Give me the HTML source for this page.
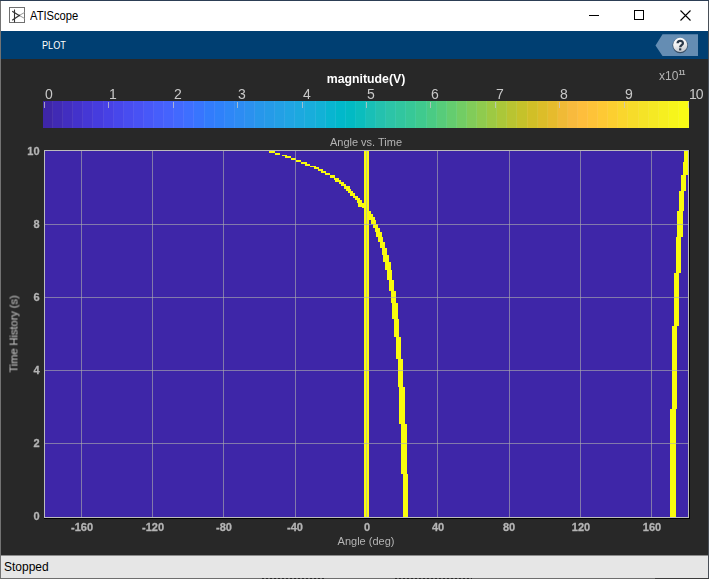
<!DOCTYPE html>
<html><head><meta charset="utf-8"><style>
*{margin:0;padding:0;box-sizing:border-box}
html,body{width:709px;height:579px;overflow:hidden;background:#282828;font-family:"Liberation Sans",sans-serif}
.a{position:absolute}
#border-l{left:0;top:0;width:1px;height:579px;background:#737373}
#border-r{left:708px;top:0;width:1px;height:579px;background:#4a5058}
#border-t{left:0;top:0;width:709px;height:1px;background:#2c3e55}
#border-b{left:0;top:578px;width:709px;height:1px;background:#6e6e6e}
#title{left:1px;top:1px;width:707px;height:30px;background:#fff}
#title .t{position:absolute;left:29px;top:7px;font-size:13px;color:#000;line-height:16px;transform:scaleX(0.86);transform-origin:0 0}
#tool{left:1px;top:31px;width:707px;height:28px;background:#003f72}
#tool .t{position:absolute;left:40.8px;top:7px;font-size:11px;color:#fff;line-height:14px;transform:scaleX(0.83);transform-origin:0 0}
#dark{left:1px;top:59px;width:707px;height:496px;background:#282828}
#status{left:1px;top:555px;width:707px;height:23px;background:#e6e6e6;border-top:1px solid #8c8c8c}
#status .t{position:absolute;left:3px;top:4px;font-size:12px;color:#000;line-height:15px}
.g{will-change:transform}
.xl{will-change:transform;-webkit-text-stroke:0.3px #b4b4b4;position:absolute;top:521px;width:60px;text-align:center;font-size:11px;font-weight:bold;color:#b4b4b4;line-height:13px}
.yl{will-change:transform;-webkit-text-stroke:0.3px #b4b4b4;position:absolute;left:0;width:39.6px;text-align:right;font-size:11px;font-weight:bold;color:#b4b4b4;line-height:14px}
.cl{will-change:transform;position:absolute;top:86px;font-size:14px;color:#c8c8c8;line-height:16px}
.ct{position:absolute;top:102px;width:1px;height:6px;background:rgba(200,200,200,0.75)}
</style></head><body>
<div class="a" id="dark"></div>
<div class="a" id="title">
  <svg class="a" style="left:8px;top:6px" width="17" height="17" viewBox="0 0 17 17">
    <rect x="0.5" y="0.5" width="15" height="15" fill="#fff" stroke="#707070" stroke-width="1"/>
    <path d="M5.5 2.5 V15.5" stroke="#333" stroke-width="1.1" fill="none"/>
    <path d="M3.2 4.3 L11 9 M3.2 13.3 L11 7.9" stroke="#333" stroke-width="1.2" fill="none"/>
    <path d="M11 8.9 L15.5 11.4 M11 8 L15.5 5.5" stroke="#9a9a9a" stroke-width="1" fill="none"/>
  </svg>
  <div class="t">ATIScope</div>
  <svg class="a" style="left:587px;top:8px" width="110" height="14" viewBox="0 0 110 14">
    <rect x="1" y="6" width="10" height="1" fill="#000"/>
    <rect x="46.5" y="1.5" width="9" height="9" fill="none" stroke="#000" stroke-width="1"/>
    <path d="M92.5 1.5 L102.5 11.5 M102.5 1.5 L92.5 11.5" stroke="#000" stroke-width="1.1" fill="none"/>
  </svg>
</div>
<div class="a" id="tool">
  <div class="t">PLOT</div>
  <svg class="a" style="left:653px;top:2px" width="46" height="25" viewBox="0 0 46 25">
    <polygon points="1.5,12.5 8.5,1.2 44,1.2 44,23 8.5,23" fill="#658db3"/>
    <defs><linearGradient id="hg" x1="0" y1="0" x2="0.3" y2="1"><stop offset="0" stop-color="#ffffff"/><stop offset="0.55" stop-color="#f2f2f2"/><stop offset="1" stop-color="#c9cdd2"/></linearGradient></defs>
    <circle cx="26.2" cy="12.6" r="7.7" fill="#2e4257" fill-opacity="0.85"/>
    <circle cx="26.2" cy="11.9" r="7.1" fill="url(#hg)"/>
    <path d="M23.6 10.3 C23.6 7.2, 28.9 7.0, 28.9 10.2 C28.9 12.2, 26.2 12.2, 26.2 14.3" stroke="#2a3848" stroke-width="2.3" fill="none"/>
    <rect x="25.1" y="15.3" width="2.2" height="2.1" fill="#2a3848"/>
  </svg>
</div>
<div class="a" id="status"><div class="t">Stopped</div></div>

<div class="a g" style="left:0;top:72px;width:709px;text-align:center;font-size:12.3px;font-weight:bold;color:#fff;line-height:15px;padding-left:23px;">magnitude(V)</div>
<div class="a g" style="left:658.5px;top:69px;font-size:12px;color:#b4b4b4;line-height:15px">x10<span style="font-size:7px;font-weight:bold;position:absolute;left:19.6px;top:-1.2px;line-height:10px;letter-spacing:-0.6px">11</span></div>
<div class="a" style="left:43px;top:101px;width:646px;height:27px;background:linear-gradient(to right,#3e26a8 0.000%, #3e26a8 1.562%,#402ab4 1.562%, #402ab4 3.125%,#422ec0 3.125%, #422ec0 4.688%,#4332cb 4.688%, #4332cb 6.250%,#4537d5 6.250%, #4537d5 7.812%,#463cde 7.812%, #463cde 9.375%,#4741e5 9.375%, #4741e5 10.938%,#4747eb 10.938%, #4747eb 12.500%,#484df0 12.500%, #484df0 14.062%,#4852f4 14.062%, #4852f4 15.625%,#4758f8 15.625%, #4758f8 17.188%,#465efb 17.188%, #465efb 18.750%,#4563fd 18.750%, #4563fd 20.312%,#4269fe 20.312%, #4269fe 21.875%,#3e6fff 21.875%, #3e6fff 23.438%,#3875fe 23.438%, #3875fe 25.000%,#327cfc 25.000%, #327cfc 26.562%,#2f81fa 26.562%, #2f81fa 28.125%,#2e87f7 28.125%, #2e87f7 29.688%,#2d8cf3 29.688%, #2d8cf3 31.250%,#2b91ef 31.250%, #2b91ef 32.812%,#2797eb 32.812%, #2797eb 34.375%,#259be8 34.375%, #259be8 35.938%,#23a0e5 35.938%, #23a0e5 37.500%,#20a5e3 37.500%, #20a5e3 39.062%,#1ca9df 39.062%, #1ca9df 40.625%,#18addb 40.625%, #18addb 42.188%,#12b1d6 42.188%, #12b1d6 43.750%,#08b5d0 43.750%, #08b5d0 45.312%,#01b8ca 45.312%, #01b8ca 46.875%,#02bac3 46.875%, #02bac3 48.438%,#0bbdbd 48.438%, #0bbdbd 50.000%,#19bfb6 50.000%, #19bfb6 51.562%,#24c1ae 51.562%, #24c1ae 53.125%,#2cc4a7 53.125%, #2cc4a7 54.688%,#31c69f 54.688%, #31c69f 56.250%,#37c897 56.250%, #37c897 57.812%,#3fca8e 57.812%, #3fca8e 59.375%,#4acb84 59.375%, #4acb84 60.938%,#57cc7a 60.938%, #57cc7a 62.500%,#64cd6f 62.500%, #64cd6f 64.062%,#72cd64 64.062%, #72cd64 65.625%,#81cc59 65.625%, #81cc59 67.188%,#8fcb4e 67.188%, #8fcb4e 68.750%,#9dc943 68.750%, #9dc943 70.312%,#abc739 70.312%, #abc739 71.875%,#b9c431 71.875%, #b9c431 73.438%,#c5c22a 73.438%, #c5c22a 75.000%,#d1bf27 75.000%, #d1bf27 76.562%,#dcbd29 76.562%, #dcbd29 78.125%,#e6bb2d 78.125%, #e6bb2d 79.688%,#f0ba36 79.688%, #f0ba36 81.250%,#f8ba3d 81.250%, #f8ba3d 82.812%,#febe3c 82.812%, #febe3c 84.375%,#fec338 84.375%, #fec338 85.938%,#fec934 85.938%, #fec934 87.500%,#fccf30 87.500%, #fccf30 89.062%,#fad62d 89.062%, #fad62d 90.625%,#f7dc2a 90.625%, #f7dc2a 92.188%,#f5e327 92.188%, #f5e327 93.750%,#f5e924 93.750%, #f5e924 95.312%,#f6ef20 95.312%, #f6ef20 96.875%,#f7f51b 96.875%, #f7f51b 98.438%,#f9fb15 98.438%, #f9fb15 100.000%)"></div>
<div class="a" style="left:43px;top:101px;width:646px;height:27px;background:repeating-linear-gradient(to right, rgba(255,255,255,0) 0 9.094px, rgba(255,255,255,0.07) 9.094px 10.094px)"></div>
<div class="ct" style="left:44px"></div><div class="ct" style="left:108px"></div><div class="ct" style="left:173px"></div><div class="ct" style="left:237px"></div><div class="ct" style="left:302px"></div><div class="ct" style="left:366px"></div><div class="ct" style="left:430px"></div><div class="ct" style="left:495px"></div><div class="ct" style="left:559px"></div><div class="ct" style="left:624px"></div><div class="ct" style="left:688px"></div>
<div class="cl" style="left:44.5px">0</div><div class="cl" style="left:108.5px">1</div><div class="cl" style="left:173.5px">2</div><div class="cl" style="left:237.5px">3</div><div class="cl" style="left:302.5px">4</div><div class="cl" style="left:366.5px">5</div><div class="cl" style="left:430.5px">6</div><div class="cl" style="left:495.5px">7</div><div class="cl" style="left:559.5px">8</div><div class="cl" style="left:624.5px">9</div><div class="cl" style="letter-spacing:-1px;left:688.5px">10</div>

<div class="a g" style="left:0;top:136px;width:709px;text-align:center;font-size:11px;color:#b4b4b4;line-height:13px;padding-left:23px">Angle vs. Time</div>
<svg class="a" style="left:0;top:0" width="709" height="579" shape-rendering="crispEdges">
  <rect x="44" y="150" width="646" height="369" fill="#000"/>
  <rect x="44" y="150" width="645" height="368" fill="#bcbcbc"/>
  <rect x="45" y="151" width="643" height="366" fill="#3e26a8"/>
  <g fill="#f9fb0e"><rect x="364" y="151" width="5" height="366"/><rect x="269" y="151" width="6" height="2"/><rect x="275" y="153" width="5" height="2"/><rect x="282" y="155" width="5" height="1"/><rect x="285" y="156" width="6" height="2"/><rect x="291" y="158" width="5" height="2"/><rect x="296" y="160" width="5" height="2"/><rect x="301" y="162" width="6" height="2"/><rect x="305" y="164" width="5" height="2"/><rect x="310" y="166" width="6" height="1"/><rect x="314" y="167" width="5" height="2"/><rect x="318" y="169" width="5" height="2"/><rect x="321" y="171" width="5" height="2"/><rect x="325" y="173" width="5" height="2"/><rect x="330" y="175" width="5" height="3"/><rect x="334" y="178" width="5" height="2"/><rect x="335" y="180" width="6" height="2"/><rect x="339" y="182" width="5" height="2"/><rect x="341" y="184" width="5" height="2"/><rect x="344" y="186" width="6" height="3"/><rect x="346" y="189" width="5" height="2"/><rect x="348" y="191" width="5" height="2"/><rect x="350" y="193" width="5" height="3"/><rect x="353" y="196" width="5" height="2"/><rect x="355" y="198" width="5" height="2"/><rect x="357" y="200" width="5" height="3"/><rect x="358" y="203" width="6" height="4"/><rect x="362" y="207" width="5" height="1"/><rect x="364" y="208" width="5" height="3"/><rect x="366" y="211" width="5" height="3"/><rect x="367" y="214" width="6" height="3"/><rect x="369" y="217" width="6" height="3"/><rect x="371" y="220" width="5" height="4"/><rect x="373" y="224" width="5" height="4"/><rect x="375" y="228" width="5" height="4"/><rect x="376" y="232" width="6" height="5"/><rect x="378" y="237" width="5" height="5"/><rect x="380" y="242" width="5" height="6"/><rect x="382" y="248" width="5" height="7"/><rect x="383" y="255" width="6" height="7"/><rect x="385" y="262" width="6" height="8"/><rect x="387" y="270" width="5" height="10"/><rect x="389" y="280" width="5" height="11"/><rect x="391" y="291" width="5" height="12"/><rect x="392" y="303" width="6" height="16"/><rect x="394" y="319" width="5" height="18"/><rect x="396" y="337" width="5" height="22"/><rect x="398" y="359" width="5" height="28"/><rect x="399" y="387" width="6" height="37"/><rect x="401" y="424" width="6" height="50"/><rect x="403" y="474" width="5" height="43"/><rect x="684" y="151" width="4" height="11"/><rect x="683" y="162" width="5" height="13"/><rect x="681" y="175" width="5" height="16"/><rect x="679" y="191" width="5" height="20"/><rect x="677" y="211" width="6" height="26"/><rect x="676" y="237" width="5" height="36"/><rect x="674" y="273" width="5" height="53"/><rect x="672" y="326" width="5" height="83"/><rect x="670" y="409" width="6" height="108"/></g>
  <g fill="#acacac" fill-opacity="0.62"><rect x="81" y="151" width="1" height="366"/><rect x="152" y="151" width="1" height="366"/><rect x="223" y="151" width="1" height="366"/><rect x="295" y="151" width="1" height="366"/><rect x="366" y="151" width="1" height="366"/><rect x="437" y="151" width="1" height="366"/><rect x="509" y="151" width="1" height="366"/><rect x="580" y="151" width="1" height="366"/><rect x="651" y="151" width="1" height="366"/><rect x="45" y="224" width="643" height="1"/><rect x="45" y="297" width="643" height="1"/><rect x="45" y="370" width="643" height="1"/><rect x="45" y="443" width="643" height="1"/></g>
</svg>
<div class="xl" style="left:51.7px">-160</div><div class="xl" style="left:123.0px">-120</div><div class="xl" style="left:194.2px">-80</div><div class="xl" style="left:265.4px">-40</div><div class="xl" style="left:336.7px">0</div><div class="xl" style="left:407.9px">40</div><div class="xl" style="left:479.2px">80</div><div class="xl" style="left:550.5px">120</div><div class="xl" style="left:621.7px">160</div>
<div class="yl" style="top:508.9px">0</div><div class="yl" style="top:435.9px">2</div><div class="yl" style="top:362.9px">4</div><div class="yl" style="top:289.9px">6</div><div class="yl" style="top:216.9px">8</div><div class="yl" style="top:143.9px">10</div>
<div class="a g" style="left:0;top:535px;width:709px;text-align:center;font-size:11px;color:#b4b4b4;line-height:13px;padding-left:23px">Angle (deg)</div>
<div class="a" style="left:-25px;top:327px;width:77px;height:14px;transform:rotate(-90deg);transform-origin:center;text-align:center;font-size:11px;color:#bcbcbc;-webkit-text-stroke:0.15px #bcbcbc;line-height:14px;white-space:nowrap">Time History (s)</div>
<div class="a" id="border-l"></div>
<div class="a" id="border-r"></div>
<div class="a" id="border-t"></div>
<div class="a" id="border-b"></div>
<div class="a" style="left:262px;top:578px;width:62px;height:1px;background:repeating-linear-gradient(to right,#2a2a2a 0 2px,#6e6e6e 2px 4px)"></div>
<div class="a" style="left:395px;top:578px;width:77px;height:1px;background:repeating-linear-gradient(to right,#2a2a2a 0 2px,#6e6e6e 2px 4px)"></div>
<div class="a" style="left:655px;top:578px;width:54px;height:1px;background:#3c3c3c"></div>
</body></html>
